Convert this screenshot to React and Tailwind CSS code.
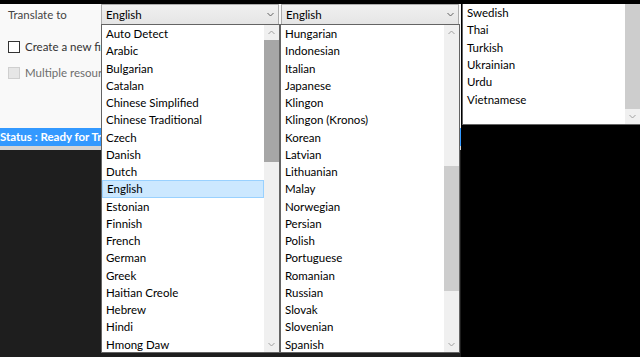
const listA = [
    "Auto Detect", "Arabic", "Bulgarian", "Catalan", "Chinese Simplified", "Chinese Traditional",
    "Czech", "Danish", "Dutch", "English", "Estonian", "Finnish", "French", "German", "Greek",
    "Haitian Creole", "Hebrew", "Hindi", "Hmong Daw"
];

const listB = [
    "Hungarian", "Indonesian", "Italian", "Japanese", "Klingon", "Klingon (Kronos)", "Korean",
    "Latvian", "Lithuanian", "Malay", "Norwegian", "Persian", "Polish", "Portuguese", "Romanian",
    "Russian", "Slovak", "Slovenian", "Spanish"
];

const listC = ["Swedish", "Thai", "Turkish", "Ukrainian", "Urdu", "Vietnamese"];

function Chevron({ up, color = "#606060" }) {
    return (
        <svg width="7" height="5" viewBox="0 0 7 5">
            <path d={up ? "M0.5 4L3.5 1L6.5 4" : "M0.5 1L3.5 4L6.5 1"} fill="none" stroke={color} strokeWidth="1" />
        </svg>
    );
}

function Combo({ value }) {
    return (
        <div className="flex h-[21px] w-[178px] items-center justify-between border border-[#acacac] bg-gradient-to-b from-[#f0f0f0] to-[#e5e5e5] pl-[4px] pr-[4px]">
            <span className="text-[11.5px] text-black">{value}</span>
            <Chevron />
        </div>
    );
}

function Scrollbar({ thumbTop, thumbHeight, thumbColor = "#cdcdcd" }) {
    return (
        <div className="relative flex h-full w-[15px] shrink-0 flex-col bg-[#f0f0f0]">
            <div className="flex h-[15px] items-center justify-center">
                <Chevron up color="#a0a0a0" />
            </div>
            <div className="flex-1" />
            <div className="flex h-[15px] items-center justify-center">
                <Chevron color="#a0a0a0" />
            </div>
            <div
                className="absolute left-0 w-[15px]"
                style={{ top: thumbTop, height: thumbHeight, background: thumbColor }}
            />
        </div>
    );
}

function Items({ items, selected }) {
    return (
        <div className="flex flex-1 flex-col">
            {items.map((it) => (
                <div
                    key={it}
                    className={`flex h-[17.35px] items-center pl-[4px] text-[11.5px] text-black ${it === selected ? "border border-[#99d1ff] bg-[#cce8ff] pl-[3px]" : ""
                        }`}
                >
                    {it}
                </div>
            ))}
        </div>
    );
}

export default function App() {
    return (
        <div className="relative h-[357px] w-[640px] overflow-hidden bg-black font-['Lato',sans-serif]">
            <div className="mt-[4px] flex h-[353px] w-[461px] flex-col">
                <div className="h-[124px] bg-[#f9f9f9]">
                    <div className="flex h-[21px] items-start">
                        <div className="w-[101px] pl-[8px] pt-[3px] text-[11.5px] leading-[16px] text-[#444]">Translate to</div>
                        <Combo value="English" />
                        <div className="w-[2px]" />
                        <Combo value="English" />
                    </div>
                    <div className="mt-[14px] flex h-[16px] items-center gap-[5px] whitespace-nowrap pl-[8px]">
                        <div className="h-[12px] w-[12px] shrink-0 border border-[#333] bg-white" />
                        <span className="text-[11.5px] text-[#333]">Create a new file for each language</span>
                    </div>
                    <div className="mt-[10px] flex h-[16px] items-center gap-[5px] whitespace-nowrap pl-[8px]">
                        <div className="h-[12px] w-[12px] shrink-0 border border-[#cfcfcf] bg-[#e6e6e6]" />
                        <span className="text-[11.5px] text-[#6d6d6d]">Multiple resource files</span>
                    </div>
                </div>
                <div className="flex h-[18px] items-center bg-[#3399ff]">
                    <span className="whitespace-nowrap text-[11.5px] font-bold text-white">
                        Status : Ready for Translation
                    </span>
                </div>
                <div className="h-[4px] bg-[#d4d4d4]" />
                <div className="flex-1 bg-[#1e1e1e]" />
            </div>

            <div className="absolute left-[101px] top-[24px] flex h-[329px] w-[179px] border border-[#646464] bg-white">
                <Items items={listA} selected="English" />
                <Scrollbar thumbTop={15} thumbHeight={122} thumbColor="#a6a6a6" />
            </div>

            <div className="absolute left-[280px] top-[24px] flex h-[329px] w-[180px] border border-[#646464] bg-white">
                <Items items={listB} />
                <Scrollbar thumbTop={141} thumbHeight={125} />
            </div>

            <div className="absolute left-[462px] top-[4px] flex h-[121px] w-[178px] border-b border-l border-[#646464] bg-white">
                <Items items={listC} />
                <div className="flex h-full w-[15px] shrink-0 flex-col bg-[#f0f0f0]">
                    <div className="h-[105px] bg-[#cdcdcd]" />
                    <div className="flex flex-1 items-center justify-center">
                        <Chevron color="#a0a0a0" />
                    </div>
                </div>
            </div>
        </div>
    );
}
